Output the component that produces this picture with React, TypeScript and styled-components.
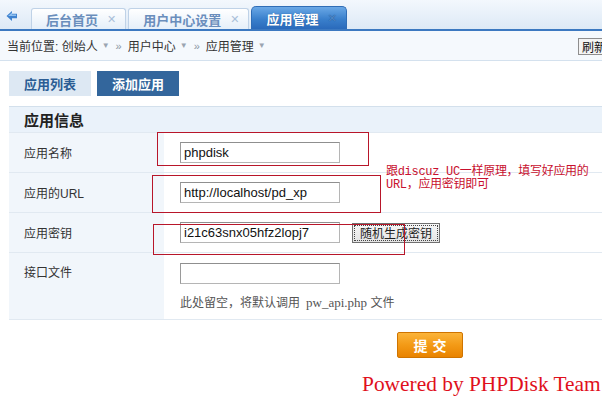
import React from "react";
import styled, { createGlobalStyle } from "styled-components";

const GlobalStyle = createGlobalStyle`
  html, body { margin: 0; padding: 0; background: #ffffff; }
  body {
    font-family: "Liberation Sans", "Noto Sans CJK SC", sans-serif;
    font-size: 12px;
    color: #333333;
  }
  * { box-sizing: border-box; }
`;

const Page = styled.div`
  width: 602px;
  height: 410px;
  overflow: hidden;
  position: relative;
`;

const TabBar = styled.div`
  height: 31px;
  display: flex;
  align-items: flex-end;
  padding-left: 6px;
  background: linear-gradient(#f3f8fd, #dde9f6);
  border-bottom: 2px solid #3c79c1;
`;

const BackArrow = styled.div`
  align-self: center;
  display: flex;
  width: 25px;
  margin-top: 2px;
`;

const Tab = styled.div<{ $active?: boolean }>`
  display: flex;
  align-items: center;
  height: ${(p) => (p.$active ? 23 : 21)}px;
  padding: 0 9px 0 14px;
  margin-right: ${(p) => (p.$active ? 0 : 2)}px;
  border: 1px solid ${(p) => (p.$active ? "#2f6db6" : "#bfd2e7")};
  border-bottom: none;
  border-radius: ${(p) => (p.$active ? "5px 5px 0 0" : "3px 3px 0 0")};
  background: ${(p) =>
    p.$active
      ? "linear-gradient(#6aa8e6, #3a80cc 55%, #2a6abb)"
      : "linear-gradient(#ffffff, #e5eff9)"};
  color: ${(p) => (p.$active ? "#ffffff" : "#6a8ebc")};
  font-weight: bold;
  font-size: 13px;
  text-shadow: ${(p) => (p.$active ? "0 0 1px #1d4f8f" : "none")};
`;

const TabClose = styled.span<{ $active?: boolean }>`
  margin-left: 9px;
  font-size: 11px;
  font-weight: bold;
  color: ${(p) => (p.$active ? "#4f86c4" : "#a9bfd9")};
  font-family: "DejaVu Sans", sans-serif;
`;

const Crumbs = styled.div`
  height: 30px;
  display: flex;
  align-items: center;
  justify-content: space-between;
  padding-left: 7px;
  background: #f5f9fd;
  border-bottom: 1px solid #d4e1ee;
  color: #333;
  overflow: hidden;
`;

const CrumbPath = styled.div`
  display: flex;
  align-items: center;
`;

const Caret = styled.span`
  color: #9aa5b1;
  font-size: 8px;
  margin: 0 6px 0 4px;
`;

const Sep = styled.span`
  color: #8a96a3;
  font-size: 11px;
  margin-right: 6px;
`;

const RefreshButton = styled.button`
  height: 17px;
  width: 24px;
  margin-top: 2px;
  padding: 0 0 0 3px;
  text-align: left;
  font-family: "Noto Sans CJK SC", sans-serif;
  font-size: 12px;
  line-height: 15px;
  background: #f4f4f4;
  border: 1px solid #8e8e8e;
  border-right: none;
  color: #111;
  overflow: hidden;
  white-space: nowrap;
`;

const Content = styled.div`
  padding: 10px 0 0 9px;
`;

const SubTabs = styled.div`
  display: flex;
  gap: 6px;
  margin-bottom: 10px;
`;

const SubTab = styled.div<{ $active?: boolean }>`
  width: 82px;
  height: 25px;
  display: flex;
  align-items: center;
  justify-content: center;
  font-weight: bold;
  font-size: 13px;
  background: ${(p) => (p.$active ? "#33669c" : "#dde8f3")};
  color: ${(p) => (p.$active ? "#ffffff" : "#2b5d94")};
`;

const FormWrap = styled.div`
  position: relative;
`;

const FormTable = styled.div`
  display: grid;
  grid-template-columns: 155px 1fr;
  border-top: 1px solid #d3e0ec;
`;

const HeaderCell = styled.div`
  grid-column: 1 / 3;
  height: 26px;
  display: flex;
  align-items: center;
  padding-left: 15px;
  background: #eaf2fa;
  font-size: 15px;
  font-weight: bold;
  color: #222;
  border-bottom: 1px solid #e1e9f1;
`;

const LabelCell = styled.div<{ $h: number }>`
  height: ${(p) => p.$h}px;
  padding: 0 0 0 15px;
  display: flex;
  align-items: ${(p) => (p.$h > 40 ? "flex-start" : "center")};
  padding-top: ${(p) => (p.$h > 40 ? 10 : 0)}px;
  background: #f1f6fb;
  border-bottom: 1px solid #e1e9f1;
  color: #333;
`;

const ValueCell = styled.div<{ $h: number }>`
  height: ${(p) => p.$h}px;
  padding-left: 16px;
  display: flex;
  flex-direction: column;
  justify-content: ${(p) => (p.$h > 40 ? "flex-start" : "center")};
  padding-top: ${(p) => (p.$h > 40 ? 10 : 0)}px;
  background: #ffffff;
  border-bottom: 1px solid #e1e9f1;
`;

const FieldLine = styled.div`
  display: flex;
  align-items: center;
  gap: 12px;
`;

const TextInput = styled.input`
  width: 160px;
  height: 21px;
  padding: 0 0 0 3px;
  border: 1px solid #b5b5b5;
  border-top-color: #8f8f8f;
  border-left-color: #9a9a9a;
  font-family: "Liberation Sans", sans-serif;
  font-size: 13px;
  color: #111;
  background: #fff;
  outline: none;
`;

const ClassicButton = styled.button`
  width: 88px;
  height: 20px;
  padding: 0;
  font-family: "Noto Sans CJK SC", sans-serif;
  font-size: 12px;
  color: #222;
  background: linear-gradient(#f6f6f6, #e4e4e4);
  border: 1px solid #707070;
  outline: 1px dotted #444;
  outline-offset: -3px;
`;

const Hint = styled.div`
  margin-top: 9px;
  color: #555;
  font-size: 12px;
`;

const SerifBit = styled.span`
  font-family: "Liberation Serif", serif;
  font-size: 13px;
  margin-left: 6px;
`;

const Annotation = styled.div<{ $l: number; $t: number; $w: number; $h: number }>`
  position: absolute;
  left: ${(p) => p.$l}px;
  top: ${(p) => p.$t}px;
  width: ${(p) => p.$w}px;
  height: ${(p) => p.$h}px;
  border: 1px solid #b8162a;
  pointer-events: none;
`;

const Note = styled.div`
  position: absolute;
  left: 377px;
  top: 60px;
  color: #c8102e;
  font-family: "Liberation Mono", "Noto Sans CJK SC", monospace;
  font-size: 12px;
  line-height: 13px;
  letter-spacing: -0.3px;
  white-space: nowrap;
`;

const Actions = styled.div`
  display: flex;
  justify-content: flex-start;
  padding: 12px 0 0 388px;
`;

const SubmitButton = styled.button`
  width: 66px;
  height: 26px;
  padding: 0;
  border: 1px solid #cf7400;
  border-radius: 2px;
  background: linear-gradient(#fbb43a, #f39a16 50%, #e98300);
  color: #ffffff;
  font-family: "Noto Sans CJK SC", sans-serif;
  font-weight: bold;
  font-size: 14px;
  letter-spacing: 5px;
  text-indent: 5px;
`;

const Footer = styled.div`
  padding: 14px 0 0 353px;
  font-family: "Liberation Serif", serif;
  font-size: 21.4px;
  line-height: 24px;
  color: #e0101c;
  white-space: nowrap;
`;

function ArrowIcon() {
  return (
    <svg width="12" height="12" viewBox="0 0 12 12">
      <path d="M0.5 6 L6 1 L6 3.8 L11 3.8 L11 8.2 L6 8.2 L6 11 Z" fill="#3e82cf" />
      <path d="M2 6 L6 2.6 L6 4.4 L10 4.4 L10 6 Z" fill="#8fc0f0" />
    </svg>
  );
}

export default function App() {
  return (
    <Page>
      <GlobalStyle />
      <TabBar>
        <BackArrow>
          <ArrowIcon />
        </BackArrow>
        <Tab>
          后台首页<TabClose>✕</TabClose>
        </Tab>
        <Tab>
          用户中心设置<TabClose>✕</TabClose>
        </Tab>
        <Tab $active>
          应用管理<TabClose $active>✕</TabClose>
        </Tab>
      </TabBar>
      <Crumbs>
        <CrumbPath>
          当前位置: 创始人<Caret>▼</Caret>
          <Sep>»</Sep>用户中心<Caret>▼</Caret>
          <Sep>»</Sep>应用管理<Caret>▼</Caret>
        </CrumbPath>
        <RefreshButton>刷新</RefreshButton>
      </Crumbs>
      <Content>
        <SubTabs>
          <SubTab>应用列表</SubTab>
          <SubTab $active>添加应用</SubTab>
        </SubTabs>
        <FormWrap>
          <FormTable>
            <HeaderCell>应用信息</HeaderCell>
            <LabelCell $h={40}>应用名称</LabelCell>
            <ValueCell $h={40}>
              <FieldLine>
                <TextInput defaultValue="phpdisk" />
              </FieldLine>
            </ValueCell>
            <LabelCell $h={40}>应用的URL</LabelCell>
            <ValueCell $h={40}>
              <FieldLine>
                <TextInput defaultValue="http://localhost/pd_xp" />
              </FieldLine>
            </ValueCell>
            <LabelCell $h={40}>应用密钥</LabelCell>
            <ValueCell $h={40}>
              <FieldLine>
                <TextInput defaultValue="i21c63snx05hfz2lopj7" />
                <ClassicButton>随机生成密钥</ClassicButton>
              </FieldLine>
            </ValueCell>
            <LabelCell $h={67}>接口文件</LabelCell>
            <ValueCell $h={67}>
              <FieldLine>
                <TextInput defaultValue="" />
              </FieldLine>
              <Hint>
                此处留空，将默认调用<SerifBit>pw_api.php</SerifBit> 文件
              </Hint>
            </ValueCell>
          </FormTable>
          <Annotation $l={148} $t={26} $w={212} $h={34} />
          <Annotation $l={143} $t={69} $w={229} $h={38} />
          <Annotation $l={144} $t={118} $w={252} $h={31} />
          <Note>
            跟discuz UC一样原理，填写好应用的
            <br />
            URL，应用密钥即可
          </Note>
        </FormWrap>
        <Actions>
          <SubmitButton>提交</SubmitButton>
        </Actions>
        <Footer>Powered by PHPDisk Team</Footer>
      </Content>
    </Page>
  );
}
